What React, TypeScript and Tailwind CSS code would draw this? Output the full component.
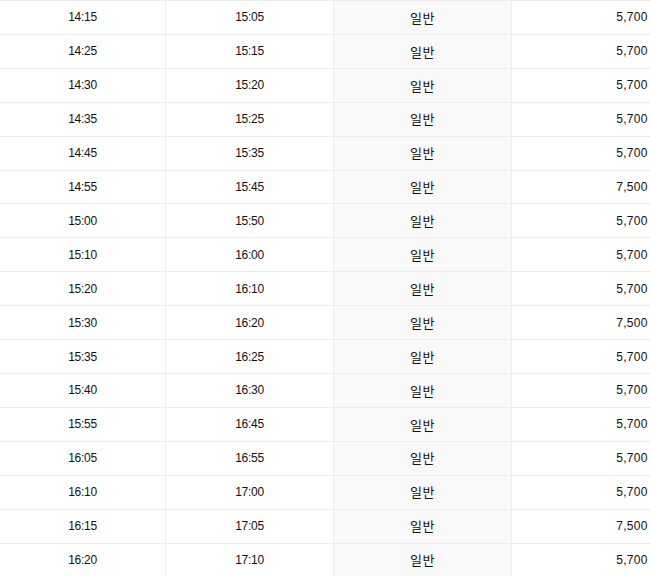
import React from "react";

const rows: [string, string, string][] = [
  ["14:15", "15:05", "5,700"],
  ["14:25", "15:15", "5,700"],
  ["14:30", "15:20", "5,700"],
  ["14:35", "15:25", "5,700"],
  ["14:45", "15:35", "5,700"],
  ["14:55", "15:45", "7,500"],
  ["15:00", "15:50", "5,700"],
  ["15:10", "16:00", "5,700"],
  ["15:20", "16:10", "5,700"],
  ["15:30", "16:20", "7,500"],
  ["15:35", "16:25", "5,700"],
  ["15:40", "16:30", "5,700"],
  ["15:55", "16:45", "5,700"],
  ["16:05", "16:55", "5,700"],
  ["16:10", "17:00", "5,700"],
  ["16:15", "17:05", "7,500"],
  ["16:20", "17:10", "5,700"],
];

export default function App() {
  return (
    <div className="w-[650px] h-[576px] overflow-hidden bg-white">
      <div
        className="w-[752px] text-[12px] text-[#111] tracking-[-0.3px]"
        style={{ fontFamily: '"Liberation Sans", "Noto Sans CJK KR", sans-serif' }}
      >
        {rows.map(([dep, arr, fare], i) => (
          <div
            key={i}
            className="grid grid-cols-[166px_168px_178px_240px] h-[33.92px] border-t border-[#ececec]"
          >
            <div className="flex items-center justify-center border-r border-[#ececec]">{dep}</div>
            <div className="flex items-center justify-center border-r border-[#ececec]">{arr}</div>
            <div
              className="flex items-center justify-center border-r border-[#ececec] bg-[#f9f9f9] tracking-[0.5px] text-[13px]"
              style={{ fontFamily: '"Noto Sans CJK KR", sans-serif' }}
            >
              일반
            </div>
            <div className="flex items-center justify-center tracking-[0.3px]">{fare}</div>
          </div>
        ))}
      </div>
    </div>
  );
}
